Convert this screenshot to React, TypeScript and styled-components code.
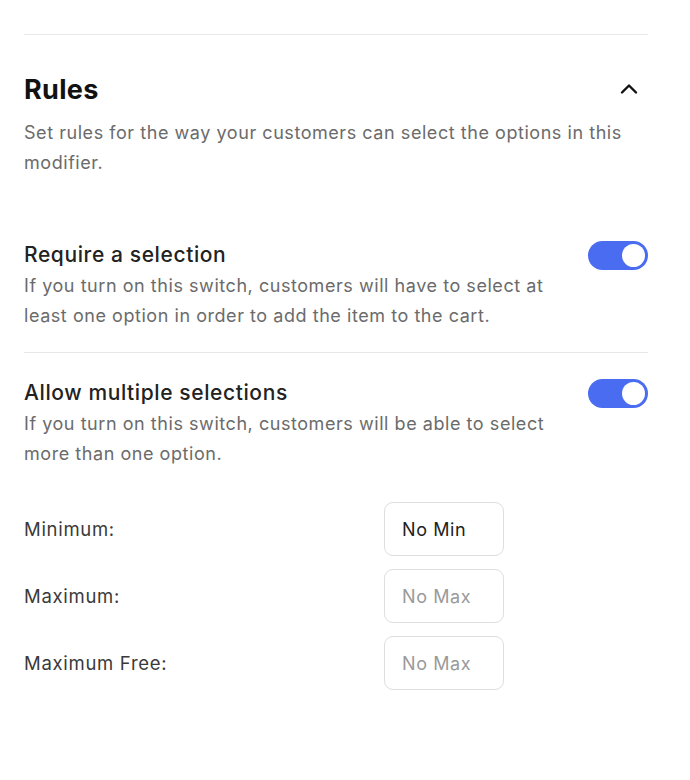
import React from 'react'
import styled, { createGlobalStyle } from 'styled-components'

const GlobalStyle = createGlobalStyle`
  html, body {
    margin: 0;
    padding: 0;
    background: #fff;
  }

  body {
    font-family: Inter, 'Liberation Sans', sans-serif;
    color: #1f1f1f;
  }
`

const Panel = styled.div`
  box-sizing: border-box;
  width: 690px;
  padding: 34px 42px 80px 24px;
`

const TopRule = styled.hr`
  margin: 0;
  border: 0;
  border-top: 1px solid #e8e8e8;
`

const SectionHeader = styled.div`
  display: flex;
  align-items: center;
  justify-content: space-between;
  margin-top: 37px;
  height: 34px;

  & > h2 {
    margin: 0;
    font-size: 27px;
    font-weight: 700;
    letter-spacing: 0.3px;
    color: #111;
  }
`

const CollapseBtn = styled.button`
  display: flex;
  align-items: center;
  justify-content: center;
  width: 32px;
  height: 32px;
  margin-right: 3px;
  padding: 0;
  border: 0;
  background: none;
  color: #111;
  cursor: pointer;
`

const Description = styled.p`
  margin: 0;
  font-size: 18px;
  line-height: 30px;
  letter-spacing: 0.55px;
  color: #6b6b6b;
`

const SectionIntro = styled(Description)`
  margin-top: 12px;
  padding-right: 20px;
`

const ToggleRow = styled.div<{ $divider?: boolean }>`
  display: flex;
  justify-content: space-between;
  align-items: flex-start;
  gap: 24px;
  padding: ${({ $divider }) => ($divider ? '24px 0 21px' : '26px 0 0')};
  border-bottom: ${({ $divider }) => ($divider ? '1px solid #e8e8e8' : 'none')};
`

const RowsWrapper = styled.div`
  margin-top: 39px;
`

const ToggleText = styled.div`
  max-width: 530px;

  & > h3 {
    margin: 0 0 2px;
    font-size: 21px;
    font-weight: 500;
    line-height: 28px;
    letter-spacing: 0.6px;
    color: #222;
  }
`

const Switch = styled.button<{ $on: boolean }>`
  position: relative;
  flex-shrink: 0;
  width: 60px;
  height: 29px;
  margin-top: 0;
  padding: 0;
  border: 0;
  border-radius: 15px;
  background: ${({ $on }) => ($on ? '#4a6cf0' : '#d7d7d7')};
  cursor: pointer;

  &:after {
    content: '';
    position: absolute;
    top: 3px;
    left: ${({ $on }) => ($on ? '34px' : '3px')};
    width: 23px;
    height: 23px;
    border-radius: 50%;
    background: #fff;
  }
`

const LimitsGrid = styled.div`
  display: grid;
  grid-template-columns: 360px 120px;
  row-gap: 13px;
  align-items: center;
  margin-top: 33px;
`

const LimitLabel = styled.label`
  font-size: 18.5px;
  letter-spacing: 0.7px;
  color: #3a3a3a;
`

const LimitInput = styled.input`
  box-sizing: border-box;
  width: 120px;
  height: 54px;
  padding: 0 17px;
  border: 1px solid #dedede;
  border-radius: 9px;
  font-family: inherit;
  font-size: 18px;
  letter-spacing: 0.6px;
  color: #222;
  outline: none;

  &::placeholder {
    color: #9a9a9a;
  }
`

const ChevronUp = () => (
  <svg width="24" height="24" viewBox="0 0 24 24" fill="none" stroke="currentColor" strokeWidth="2.4" strokeLinecap="round" strokeLinejoin="round">
    <polyline points="5,15.5 12,8.5 19,15.5" />
  </svg>
)

const limits = [
  { label: 'Minimum:', value: 'No Min', placeholder: 'No Min' },
  { label: 'Maximum:', value: '', placeholder: 'No Max' },
  { label: 'Maximum Free:', value: '', placeholder: 'No Max' },
]

const App = () => {
  return (
    <>
      <GlobalStyle />
      <Panel>
        <TopRule />
        <SectionHeader>
          <h2>Rules</h2>
          <CollapseBtn aria-label="Collapse">
            <ChevronUp />
          </CollapseBtn>
        </SectionHeader>
        <SectionIntro>Set rules for the way your customers can select the options in this modifier.</SectionIntro>

        <RowsWrapper>
          <ToggleRow $divider>
            <ToggleText>
              <h3>Require a selection</h3>
              <Description>
                If you turn on this switch, customers will have to select at least one option in order to add the item
                to the cart.
              </Description>
            </ToggleText>
            <Switch $on aria-label="Require a selection" />
          </ToggleRow>
          <ToggleRow>
            <ToggleText>
              <h3>Allow multiple selections</h3>
              <Description>If you turn on this switch, customers will be able to select more than one option.</Description>
            </ToggleText>
            <Switch $on aria-label="Allow multiple selections" />
          </ToggleRow>
        </RowsWrapper>

        <LimitsGrid>
          {limits.map((l) => (
            <React.Fragment key={l.label}>
              <LimitLabel>{l.label}</LimitLabel>
              <LimitInput defaultValue={l.value} placeholder={l.placeholder} />
            </React.Fragment>
          ))}
        </LimitsGrid>
      </Panel>
    </>
  )
}

export default App
